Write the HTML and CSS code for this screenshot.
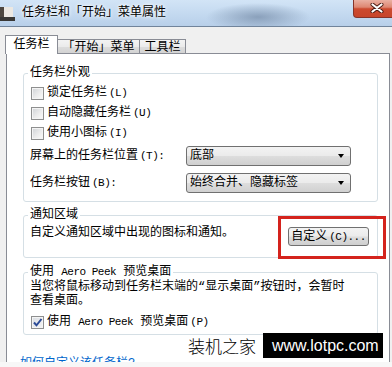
FILE: index.html
```html
<!DOCTYPE html>
<html>
<head>
    <meta charset="utf-8">
    <link rel="stylesheet" href="styles.css">
</head>
<body>
    <div class="window">
        <div class="titlebar">
            <svg class="app-icon" viewBox="0 0 15 14" width="15" height="14">
                <rect x="0" y="0" width="13" height="10" fill="#ece8e2"/>
                <rect x="0" y="0" width="4" height="14" fill="#4e4740"/>
                <rect x="0" y="10" width="15" height="4" fill="#3a3836"/>
            </svg>
            <span class="title">任务栏和「开始」菜单属性</span>
            <button class="close-btn" aria-label="关闭">
                <svg viewBox="0 0 14 10" width="14" height="10">
                    <path d="M2.5 1.5l9 7M11.5 1.5l-9 7" stroke="#4a1a12" stroke-width="4" stroke-linecap="round"/>
                    <path d="M2.5 1.5l9 7M11.5 1.5l-9 7" stroke="#fff" stroke-width="2.2" stroke-linecap="round"/>
                </svg>
            </button>
        </div>

        <div class="dialog-body">
            <div class="tabs">
                <div class="tab active">任务栏</div>
                <div class="tab tab-start">「开始」菜单</div>
                <div class="tab tab-tools">工具栏</div>
            </div>

            <div class="tab-panel">
                <fieldset class="group group-look">
                    <legend>任务栏外观</legend>
                    <div class="check-row"><span class="checkbox"></span>锁定任务栏<span class="key">(L)</span></div>
                    <div class="check-row"><span class="checkbox"></span>自动隐藏任务栏<span class="key">(U)</span></div>
                    <div class="check-row"><span class="checkbox"></span>使用小图标<span class="key">(I)</span></div>
                    <div class="select-row first">
                        <span>屏幕上的任务栏位置<span class="key">(T):</span></span>
                        <div class="select">底部<i class="arrow"></i></div>
                    </div>
                    <div class="select-row">
                        <span>任务栏按钮<span class="key">(B):</span></span>
                        <div class="select">始终合并、隐藏标签<i class="arrow"></i></div>
                    </div>
                </fieldset>

                <fieldset class="group group-notify">
                    <legend>通知区域</legend>
                    <div class="notify-row">
                        <span>自定义通知区域中出现的图标和通知。</span>
                        <div class="btn-wrap">
                            <button class="btn">自定义<span class="key">(C)...</span></button>
                            <div class="highlight-box"></div>
                        </div>
                    </div>
                </fieldset>

                <fieldset class="group group-peek">
                    <legend>使用 <span class="latin">Aero Peek</span> 预览桌面</legend>
                    <p class="desc">当您将鼠标移动到任务栏末端的“显示桌面”按钮时，会暂时<br>查看桌面。</p>
                    <div class="check-row peek-check">
                        <span class="checkbox checked">
                            <svg viewBox="0 0 11 11" width="11" height="11">
                                <path d="M2 5.5l2.5 2.8L9.5 2" fill="none" stroke="#2b4a96" stroke-width="2"/>
                            </svg>
                        </span>使用 <span class="latin">Aero Peek</span> 预览桌面<span class="key">(P)</span>
                    </div>
                </fieldset>

                <a class="help-link" href="#">如何自定义该任务栏?</a>
            </div>
        </div>

        <div class="watermark">
            <span class="wm-name">装机之家</span>
            <span class="wm-url">www.lotpc.com</span>
        </div>
    </div>
</body>
</html>
```

FILE: styles.css
```css
* {
    margin: 0;
    padding: 0;
    box-sizing: border-box;
}

body {
    background: #f7f7f7;
    font-family: "Liberation Mono", "Noto Sans CJK SC", monospace;
    font-size: 12px;
    line-height: 14px;
    color: #000;
}

.window {
    position: relative;
    width: 392px;
    height: 362px;
    overflow: hidden;
    background: #f0f0f0;
}

/* latin bits are narrower in the original dialog font */
.key,
.latin {
    font-size: 11px;
    letter-spacing: -0.5px;
}

.key {
    margin-left: 2px;
}

/* title bar */
.titlebar {
    height: 27px;
    display: flex;
    align-items: center;
    overflow: hidden;
    border-bottom: 1px solid #71849b;
    background:
        radial-gradient(ellipse 52px 14px at 258px 17px, rgba(120, 142, 170, 0.75), rgba(120, 142, 170, 0)),
        linear-gradient(180deg, #d2e4f6 0%, #c2d8ef 60%, #b8cfe9 100%);
}

.app-icon {
    flex: none;
    margin-top: 2px;
}

.title {
    margin-left: 7px;
    text-shadow: 0 0 5px #fff, 0 0 3px #fff;
}

.close-btn {
    align-self: flex-start;
    margin-left: auto;
    margin-right: -4px;
    width: 43px;
    height: 18px;
    display: flex;
    align-items: flex-start;
    padding: 3px 0 0 16px;
    border: 1px solid #86342a;
    border-top: none;
    border-radius: 0 0 0 4px;
    background: linear-gradient(180deg, #eab0a2 0%, #de8772 42%, #cc4a2f 52%, #c7452b 100%);
}

/* tabs */
.dialog-body {
    padding-top: 8px;
}

.tabs {
    display: flex;
    align-items: flex-end;
    height: 18px;
    padding-left: 5px;
}

.tab {
    height: 14px;
    padding-top: 1px;
    text-align: center;
    border: 1px solid #898c95;
    border-bottom: none;
    background: linear-gradient(180deg, #f3f3f3 0%, #ebebeb 50%, #dddddd 51%, #d3d3d3 100%);
}

.tab.active {
    position: relative;
    z-index: 1;
    width: 53px;
    height: 19px;
    margin-bottom: -1px;
    padding-top: 2px;
    background: #fff;
}

.tab-start {
    width: 83px;
    margin-left: -1px;
}

.tab-tools {
    width: 47px;
    margin-left: -1px;
}

.tab-panel {
    margin: 0 2px 0 6px;
    min-height: 400px;
    padding-top: 12px;
    border: 1px solid #898c95;
    background: #fff;
}

/* group boxes */
.group {
    width: 355px;
    margin-left: 16px;
    padding: 3px 6px 8px;
    border: 1px solid #d5dfe5;
    border-radius: 3px;
}

.group legend {
    margin-left: -2px;
    padding: 0 2px;
    line-height: 14px;
}

.group-notify {
    margin-top: 6px;
    padding: 4px 6px 11px;
}

.group-peek {
    margin-top: 7px;
    padding: 1px 6px 2px;
}

.check-row {
    height: 20px;
    display: flex;
    align-items: center;
    white-space: pre;
}

.checkbox {
    width: 13px;
    height: 13px;
    margin: 0 3px 0 1px;
    display: flex;
    align-items: center;
    justify-content: center;
    border: 1px solid #8e8f8f;
    background: linear-gradient(135deg, #cfd2d6 0%, #eeeeee 60%, #fbfbfb 100%);
    box-shadow: inset 0 0 0 1px #f4f4f4;
}

.checkbox.checked {
    background: linear-gradient(135deg, #d9dde3 0%, #f4f4f4 100%);
}

.select-row {
    height: 20px;
    margin-top: 7px;
    display: grid;
    grid-template-columns: 156px 165px;
    align-items: center;
}

.select-row.first {
    margin-top: 3px;
}

.select {
    height: 20px;
    display: flex;
    align-items: center;
    padding: 0 6px 0 3px;
    border: 1px solid #707070;
    border-radius: 3px;
    background: linear-gradient(180deg, #f3f3f3 0%, #ebebeb 48%, #dddddd 52%, #d0d0d0 100%);
}

.arrow {
    margin-left: auto;
    width: 0;
    height: 0;
    border-left: 3.5px solid transparent;
    border-right: 3.5px solid transparent;
    border-top: 4px solid #000;
}

.notify-row {
    height: 20px;
    display: flex;
    justify-content: space-between;
    align-items: flex-start;
}

.btn-wrap {
    position: relative;
    margin: 1px 2px 0 0;
}

.btn {
    width: 81px;
    height: 19px;
    display: block;
    padding: 0;
    white-space: nowrap;
    font: inherit;
    line-height: 16px;
    border: 1px solid #707070;
    border-radius: 3px;
    background: linear-gradient(180deg, #f3f3f3 0%, #ebebeb 48%, #dddddd 52%, #cfcfcf 100%);
    color: #000;
}

/* red annotation frame around the button */
.highlight-box {
    position: absolute;
    left: -10px;
    top: -11px;
    width: 108px;
    height: 43px;
    border: 3px solid #d4231d;
}

.desc {
    line-height: 14px;
}

.peek-check {
    margin-top: 4px;
}

.help-link {
    display: block;
    margin: 22px 0 0 13px;
    color: #0066cc;
    text-decoration: none;
}

/* watermark */
.watermark {
    position: absolute;
    left: 188px;
    top: 333px;
    height: 25px;
    display: flex;
    align-items: center;
    gap: 7px;
}

.wm-name {
    font-family: "Noto Sans CJK SC", sans-serif;
    font-size: 17px;
    line-height: 25px;
    font-weight: 300;
}

.wm-url {
    width: 120px;
    height: 25px;
    padding-left: 9px;
    background: #000;
    color: #fff;
    font-family: "Liberation Sans", sans-serif;
    font-size: 16px;
    line-height: 25px;
}
```
